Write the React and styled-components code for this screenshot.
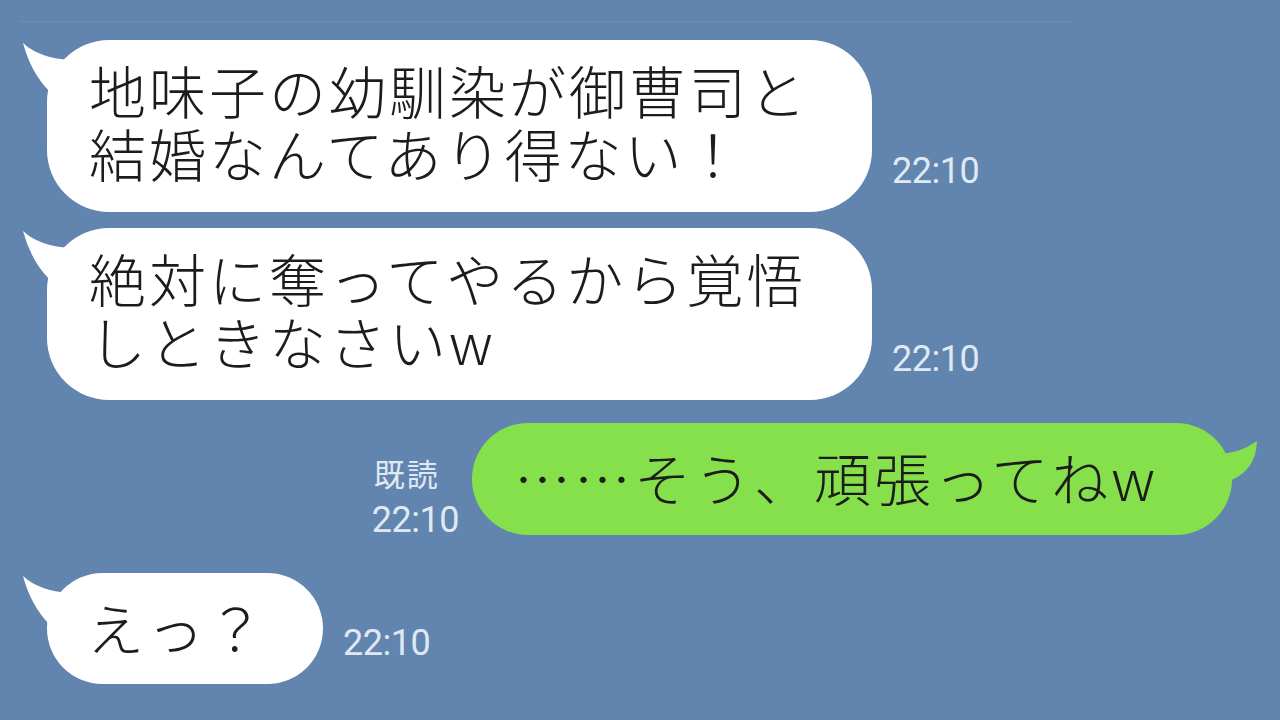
import React from "react";
import styled, { createGlobalStyle } from "styled-components";

const GlobalStyle = createGlobalStyle`
  html, body {
    margin: 0;
    padding: 0;
    background: #6285af;
  }
  body {
    font-family: "Noto Sans CJK JP", "Noto Sans", sans-serif;
  }
`;

const Page = styled.div`
  width: 1280px;
  height: 720px;
  overflow: hidden;
  background: #6285af;
  display: flex;
  flex-direction: column;
`;

const Divider = styled.div`
  height: 1px;
  margin: 21px 208px 0 20px;
  background: #6b94a6;
`;

const Thread = styled.div`
  display: flex;
  flex-direction: column;
`;

const Row = styled.div`
  display: flex;
  align-items: flex-end;
  justify-content: ${(p) => (p.$mine ? "flex-end" : "flex-start")};
  margin-top: ${(p) => p.$top}px;
  padding: ${(p) => (p.$mine ? "0 48px 0 0" : "0 0 0 47px")};
`;

const Bubble = styled.div`
  position: relative;
  box-sizing: border-box;
  width: ${(p) => p.$w}px;
  padding: ${(p) => p.$pad};
  border-radius: ${(p) => (p.$mine ? 56 : 62)}px;
  background: ${(p) => (p.$mine ? "#86e04c" : "#ffffff")};
`;

const MessageText = styled.div`
  position: relative;
  z-index: 1;
  font-family: "Noto Sans CJK JP Light", "Noto Sans CJK JP DemiLight", "Noto Sans CJK JP", "Noto Sans", sans-serif;
  font-weight: 300;
  font-size: 57px;
  line-height: 63px;
  letter-spacing: 3px;
  color: #1c1c1c;
  white-space: nowrap;
`;

const Tail = styled.svg`
  position: absolute;
  top: 0;
  width: 60px;
  height: 70px;
  ${(p) => (p.$mine ? "right: -28px;" : "left: -28px;")}
`;

const Stamp = styled.div`
  font-family: Roboto, "Noto Sans", sans-serif;
  font-size: 36px;
  line-height: 36px;
  letter-spacing: -0.5px;
  color: #dfe9f3;
  white-space: nowrap;
`;

const IncomingStamp = styled(Stamp)`
  margin: 0 0 23px 20px;
`;

const ReadMeta = styled.div`
  display: flex;
  flex-direction: column;
  align-items: flex-start;
  margin: 0 13px -3px 0;
`;

const ReadLabel = styled.div`
  font-family: "Noto Sans CJK JP", sans-serif;
  font-size: 31px;
  line-height: 38px;
  letter-spacing: 2px;
  color: #dfe9f3;
  margin: 0 0 10px 2px;
`;

const WhiteTail = () => (
  <Tail viewBox="0 0 60 70" aria-hidden="true">
    <path d="M4,3 Q20,18 51,20 L40,45 L31,52 Q12,33 4,3 Z" fill="#ffffff" />
  </Tail>
);

const GreenTail = () => (
  <Tail $mine viewBox="0 0 60 70" aria-hidden="true">
    <path d="M57,18 Q39,31 16,31 L10,50 L23,60 Q56,51 57,18 Z" fill="#86e04c" />
  </Tail>
);

const Incoming = ({ top, w, pad, lines, time }) => (
  <Row $top={top}>
    <Bubble $w={w} $pad={pad}>
      <WhiteTail />
      <MessageText>
        {lines.map((l, i) => (
          <div key={i}>{l}</div>
        ))}
      </MessageText>
    </Bubble>
    <IncomingStamp>{time}</IncomingStamp>
  </Row>
);

export default function App() {
  return (
    <>
      <GlobalStyle />
      <Page>
        <Divider />
        <Thread>
          <Incoming
            top={18}
            w={825}
            pad="18px 0 28px 42px"
            lines={["地味子の幼馴染が御曹司と", "結婚なんてあり得ない！"]}
            time="22:10"
          />
          <Incoming
            top={16}
            w={825}
            pad="18px 0 28px 42px"
            lines={["絶対に奪ってやるから覚悟", "しときなさいw"]}
            time="22:10"
          />
          <Row $mine $top={23}>
            <ReadMeta>
              <ReadLabel>既読</ReadLabel>
              <Stamp>22:10</Stamp>
            </ReadMeta>
            <Bubble $mine $w={760} $pad="22px 0 27px 42px">
              <GreenTail />
              <MessageText>……そう、頑張ってねw</MessageText>
            </Bubble>
          </Row>
          <Incoming
            top={38}
            w={276}
            pad="22px 0 26px 40px"
            lines={["えっ？"]}
            time="22:10"
          />
        </Thread>
      </Page>
    </>
  );
}
